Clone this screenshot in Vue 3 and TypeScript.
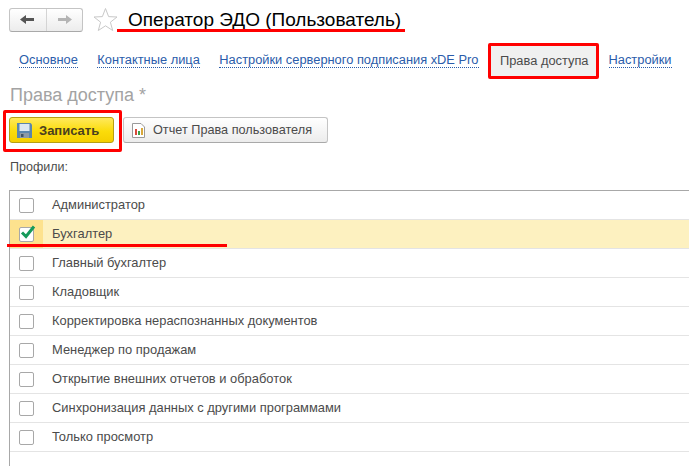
<script setup lang="ts">
const tabs = [
  { name: 'Основное' },
  { name: 'Контактные лица' },
  { name: 'Настройки серверного подписания xDE Pro' },
  { name: 'Права доступа', active: true },
  { name: 'Настройки' }
]

const profiles = [
  { name: 'Администратор', checked: false },
  { name: 'Бухгалтер', checked: true },
  { name: 'Главный бухгалтер', checked: false },
  { name: 'Кладовщик', checked: false },
  { name: 'Корректировка нераспознанных документов', checked: false },
  { name: 'Менеджер по продажам', checked: false },
  { name: 'Открытие внешних отчетов и обработок', checked: false },
  { name: 'Синхронизация данных с другими программами', checked: false },
  { name: 'Только просмотр', checked: false }
]
</script>

<template>
  <div class="page">
    <header class="top">
      <div class="nav">
        <button class="nav-btn">
          <svg width="15" height="11" viewBox="0 0 15 11"><path d="M0 5.500 6 1v3h8v3H6v3z" fill="#555" /></svg>
        </button>
        <button class="nav-btn">
          <svg width="15" height="11" viewBox="0 0 15 11"><path d="M15 5.500 9 1v3H1v3h8v3z" fill="#b4b4b4" /></svg>
        </button>
      </div>
      <svg class="star" width="25" height="25" viewBox="0 0 25 25">
        <path d="M12.500 1.500 15.600 9.600 24 10 17.400 15.200 19.700 23.500 12.500 18.800 5.300 23.500 7.600 15.200 1 10 9.400 9.600z" fill="#fff" stroke="#c8c8c8" />
      </svg>
      <h1 class="title">Оператор ЭДО (Пользователь)</h1>
    </header>

    <nav class="tabs">
      <template v-for="tab in tabs" :key="tab.name">
        <span v-if="tab.active" class="tab-active">{{ tab.name }}</span>
        <a v-else class="tab">{{ tab.name }}</a>
      </template>
    </nav>

    <h2 class="heading">Права доступа *</h2>

    <div class="toolbar">
      <button class="btn primary">
        <svg width="15" height="15" viewBox="0 0 15 15">
          <path d="M0 0h13.500L15 1.500V15H0z" fill="#5b86ad" />
          <rect x="2.500" y="1" width="10" height="7" fill="#dce8f2" />
          <rect x="3" y="10" width="9" height="5" fill="#8d9aa6" />
          <rect x="4" y="11" width="2.500" height="3" fill="#3f5468" />
        </svg>
        <span>Записать</span>
      </button>
      <button class="btn">
        <svg width="13" height="15" viewBox="0 0 13 15">
          <path d="M.5.5h8.500l3.500 3.500v10.500H.5z" fill="#fff" stroke="#9a9a9a" />
          <rect x="3" y="6" width="2" height="6" fill="#d84a3a" />
          <rect x="6" y="8" width="2" height="4" fill="#3aa04a" />
          <rect x="9" y="5" width="2" height="7" fill="#d8a83a" />
        </svg>
        <span>Отчет Права пользователя</span>
      </button>
    </div>

    <div class="label">Профили:</div>

    <div class="grid">
      <div v-for="p in profiles" :key="p.name" class="row" :class="{ selected: p.checked }">
        <div class="cell-check">
          <span class="checkbox">
            <svg v-if="p.checked" width="18" height="16" viewBox="0 0 18 16">
              <path d="M3 8.500 7 12.500 15 2.500" fill="none" stroke="#169a5a" stroke-width="3" />
            </svg>
          </span>
        </div>
        <div class="cell-name">{{ p.name }}</div>
      </div>
    </div>

    <!-- пометки красным поверх скриншота -->
    <div class="mark mark-title"></div>
    <div class="mark mark-row"></div>
    <div class="frame frame-tab"></div>
    <div class="frame frame-save"></div>
  </div>
</template>

<style scoped>
.page {
  position: relative;
  width: 689px;
  height: 466px;
  overflow: hidden;
  background: #fff;
  font-family: "Liberation Sans", Arial, sans-serif;
  font-size: 12.5px;
  color: #4b4b4b;
}

.top {
  display: flex;
  align-items: center;
  height: 25px;
  padding: 7px 0 0 9px;
}

.nav {
  display: flex;
  flex: none;
  width: 74px;
  height: 24px;
  box-sizing: border-box;
  border: 1px solid #c4c4c4;
  border-bottom-color: #a9a9a9;
  border-radius: 3px;
  background: linear-gradient(#fff, #ececec);
}

.nav-btn {
  flex: 1;
  display: flex;
  align-items: center;
  justify-content: center;
  padding: 0;
  border: none;
  background: none;
}

.nav-btn + .nav-btn {
  border-left: 1px solid #d4d4d4;
}

.star {
  margin-left: 10px;
  flex: none;
}

.title {
  margin: 0 0 0 10px;
  font-size: 19px;
  font-weight: 400;
  color: #000;
  white-space: nowrap;
}

.tabs {
  display: flex;
  align-items: center;
  height: 32px;
  margin-top: 12px;
  padding-left: 19px;
  font-size: 12.85px;
}

.tab {
  margin-right: 19.5px;
  color: #2a5caa;
  line-height: 14px;
  border-bottom: 1px dotted #2a5caa;
  white-space: nowrap;
}

.tab-active {
  display: flex;
  align-items: center;
  height: 32px;
  box-sizing: border-box;
  margin: 0 10px 0 -8px;
  padding: 0 10px;
  background: #f0f0f0;
  color: #4b4b4b;
  white-space: nowrap;
}

.heading {
  margin: 8px 0 0 10px;
  font-size: 18px;
  line-height: 22px;
  font-weight: 400;
  color: #a3a3a3;
}

.toolbar {
  display: flex;
  gap: 9px;
  margin: 11px 0 0 9px;
}

.btn {
  display: flex;
  align-items: center;
  gap: 8px;
  height: 26px;
  width: 205px;
  box-sizing: border-box;
  padding: 0 8px;
  border: 1px solid #c4c4c4;
  border-bottom-color: #a9a9a9;
  border-radius: 3px;
  background: linear-gradient(#fff, #ececec);
  font: 12.7px "Liberation Sans", Arial, sans-serif;
  color: #4b4b4b;
  white-space: nowrap;
}

.btn.primary {
  width: 105px;
  padding-left: 7px;
  gap: 7px;
  border-color: #b79f12;
  background: linear-gradient(#ffe95c, #fbdc0a 55%, #f5cf00);
  color: #4a4020;
  font-size: 13px;
  font-weight: 700;
}

.label {
  margin: 17px 0 0 10px;
  line-height: 15px;
}

.grid {
  margin: 15px 0 0 9px;
  height: 300px;
  border-top: 1px solid #a8a8a8;
  border-left: 1px solid #a8a8a8;
}

.row {
  display: flex;
  align-items: center;
  height: 29px;
  box-sizing: border-box;
  border-bottom: 1px solid #e4e4e4;
}

.row.selected {
  background: #fdf1c0;
}

.cell-check {
  display: flex;
  align-items: center;
  justify-content: center;
  flex: none;
  width: 33px;
  height: 100%;
}

.selected .cell-check {
  background: #fde28e;
}

.checkbox {
  position: relative;
  width: 15px;
  height: 15px;
  box-sizing: border-box;
  border: 1px solid #a8a8a8;
  border-radius: 2px;
  background: #fff;
}

.checkbox svg {
  position: absolute;
  left: -1px;
  top: -4px;
}

.cell-name {
  margin-left: 9px;
  padding-bottom: 2px;
  font-size: 12.9px;
  white-space: nowrap;
}

.mark {
  position: absolute;
  height: 3px;
  background: #f00;
}

.mark-title {
  left: 117px;
  top: 29px;
  width: 288px;
}

.mark-row {
  left: 7px;
  top: 244px;
  width: 220px;
}

.frame {
  position: absolute;
  box-sizing: border-box;
  border: 3px solid #f00;
  border-radius: 2px;
}

.frame-tab {
  left: 488px;
  top: 43px;
  width: 111px;
  height: 36px;
}

.frame-save {
  left: 3px;
  top: 110px;
  width: 119px;
  height: 42px;
}
</style>
